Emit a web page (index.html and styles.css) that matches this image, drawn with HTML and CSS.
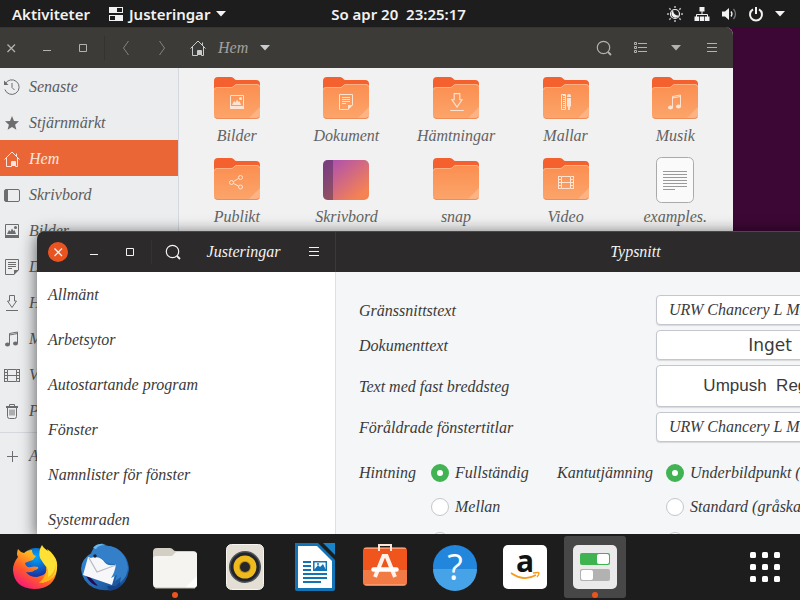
FILE: index.html
```html
<!DOCTYPE html>
<html lang="sv">
<head>
<meta charset="utf-8">
<title>Justeringar</title>
<link rel="stylesheet" href="styles.css">
</head>
<body>
<svg class="defs" aria-hidden="true">
  <defs>
    <linearGradient id="g-folder" x1="0" y1="0" x2="0" y2="1"><stop offset="0" stop-color="#fb8e50"/><stop offset="1" stop-color="#fca56b"/></linearGradient>
    <linearGradient id="g-desk" x1="0" y1="0" x2="1" y2="1"><stop offset="0" stop-color="#a849b4"/><stop offset=".2" stop-color="#b757a4"/><stop offset=".85" stop-color="#f58253"/></linearGradient>
    <symbol id="i-home" viewBox="0 0 16 16"><path d="M.5 8.500 8 1l7.500 7.500M2.500 7v8.500h5v-5h4v5h2V7M12.500 2.500v3" fill="none" stroke="currentColor"/><path d="M8 10h3v5H8z" fill="currentColor"/></symbol>
    <symbol id="i-recent" viewBox="0 0 16 16"><path d="M1.200 5A7.300 7.300 0 1 1 .9 10.500M8 4v4.500l2.500 2.500" fill="none" stroke="currentColor"/><path d="M0 1.500V6h4.500z" fill="currentColor"/></symbol>
    <symbol id="i-star" viewBox="0 0 16 16"><path d="m8 1 2 4.900 5 .4-3.900 3.400 1.300 5.100L8 12l-4.400 2.800 1.300-5.100L1 6.300l5-.4z" fill="currentColor"/></symbol>
    <symbol id="i-desktop" viewBox="0 0 16 16"><rect x=".5" y="2.500" width="15" height="12" rx="1.500" fill="none" stroke="currentColor"/><path d="M1 3h3v11H1z" fill="currentColor"/></symbol>
    <symbol id="i-image" viewBox="0 0 16 16"><path d="M1.500 1.500h13v13h-13z" fill="none" stroke="currentColor"/><path d="M1 12h14v3H1zM3 11l2-4 1.500 1.500L8 5.500l1.500 2.500 1-1 1.500 4z" fill="currentColor"/><circle cx="11.500" cy="4.500" r="1.500" fill="currentColor"/></symbol>
    <symbol id="i-doc" viewBox="0 0 16 16"><path d="M10 15.500H1.500V.5h13V11M4 3.500h8M4 5.500h8M4 7.500h8M4 9.500h4" fill="none" stroke="currentColor"/><path d="M10 11h5l-5 5z" fill="currentColor"/></symbol>
    <symbol id="i-down" viewBox="0 0 16 16"><path d="M5.500.5h5V6h2L8 12.500 3.500 6h2zM2 15.500h12" fill="none" stroke="currentColor"/></symbol>
    <symbol id="i-music" viewBox="0 0 16 16"><path d="M5.500 13.500v-11l8-1.500v11M5.500 4l8-1.500" fill="none" stroke="currentColor"/><ellipse cx="3.500" cy="13.500" rx="2.500" ry="2" fill="currentColor"/><ellipse cx="11.500" cy="12.500" rx="2.500" ry="2" fill="currentColor"/></symbol>
    <symbol id="i-film" viewBox="0 0 16 16"><path d="M3.500 2.500h9v12h-9zM3 8.500h10M.5 2v13M15.500 2v13" fill="none" stroke="currentColor"/><path d="M2 2v13M14 2v13" stroke="currentColor" stroke-width="2" stroke-dasharray="1 2"/></symbol>
    <symbol id="i-trash" viewBox="0 0 16 16"><path d="M2 4h12M5.500 3V1.500h5V3M3.500 4v9.500q0 2 2 2h5q2 0 2-2V4M6 6.500v6M8 6.500v6M10 6.500v6" fill="none" stroke="currentColor"/><path d="M2 3h12v2H2z" fill="currentColor"/></symbol>
    <symbol id="i-plus" viewBox="0 0 16 16"><path d="M8.500 3v11M3 8.500h11" stroke="currentColor"/></symbol>
    <symbol id="i-share" viewBox="0 0 16 16"><g fill="none" stroke="currentColor"><circle cx="3.500" cy="8.500" r="2"/><circle cx="12.500" cy="3.500" r="2"/><circle cx="12.500" cy="13" r="2"/><path d="m5.500 7.500 5-3M5.500 9.500l5 2.500"/></g></symbol>
    <symbol id="i-template" viewBox="0 0 16 16"><path d="M3.500.5h4v15h-4z" fill="none" stroke="currentColor"/><path d="M6 1v14" stroke="currentColor" stroke-width="2" stroke-dasharray="1 1"/><path d="M9 2q0-2 2-2t2 2v1H9zM9 4h4v8l-1 1v3h-2v-3l-1-1z" fill="currentColor"/></symbol>
    <symbol id="i-search" viewBox="0 0 16 16"><circle cx="7.500" cy="7.500" r="6.200" fill="none" stroke="currentColor" stroke-width="1.200"/><path d="m12 12 3 3" stroke="currentColor" stroke-width="1.800"/></symbol>
    <symbol id="i-menu" viewBox="0 0 16 16"><path d="M3 3.500h10M3 7.500h10M3 11.500h10" stroke="currentColor"/></symbol>
    <symbol id="i-caret" viewBox="0 0 10 6"><path d="M0 0h10L5 5.500z" fill="currentColor"/></symbol>
    <symbol id="i-close" viewBox="0 0 16 16"><path d="m4.500 4.500 7.500 7.500M12 4.500 4.500 12" stroke="currentColor" stroke-width="1.300"/></symbol>
    <symbol id="i-min" viewBox="0 0 16 16"><path d="M4 10.500h8" stroke="currentColor"/></symbol>
    <symbol id="i-max" viewBox="0 0 16 16"><path d="M4.500 4.500h7v7h-7z" fill="none" stroke="currentColor"/></symbol>
    <symbol id="f-folder" viewBox="0 0 46 44">
      <path d="M0 42h46v-1H0z" fill="#000" opacity=".08"/>
      <path d="M0 5q0-4 4-4h13q2 0 3 1.500T23 4h19q4 0 4 4v30H0z" fill="#f4602e"/>
      <path d="M0 14q0-3 3-3h14q2 0 3-1.500T23 8h20q3 0 3 3v28q0 4-4 4H4q-4 0-4-4z" fill="url(#g-folder)"/>
      <path d="M.5 14q0-2.500 2.500-2.500h14q2 0 3-1.500t3-1.500h20q2.500 0 2.500 2.500" fill="none" stroke="#ffb184"/>
      <path d="M46 31v8q0 4-4 4h-8z" fill="#fdb384"/>
      <path d="M1 41q1 1.500 3 1.500h38q2 0 3-1.500" fill="none" stroke="#ee8d5a"/>
    </symbol>
  </defs>
</svg>

<header class="topbar">
  <div class="topbar-left">
    <button class="top-btn">Aktiviteter</button>
    <button class="top-btn app-menu">
      <svg width="14" height="14" viewBox="0 0 14 14"><path fill="#f2f2f2" fill-rule="evenodd" d="M0 0h14v6H0zM8 1v4h5V1zM0 8h14v6H0zM1 9v4h5V9z"/></svg>
      Justeringar
      <svg class="caret" width="10" height="6"><use href="#i-caret"/></svg>
    </button>
  </div>
  <time class="clock">So apr 20&nbsp; 23:25:17</time>
  <div class="status">
    <svg width="16" height="16" viewBox="0 0 16 16"><circle cx="8" cy="8" r="4.500" fill="none" stroke="currentColor" stroke-width="1.200"/><path d="M6 4.500a4 4 0 1 0 6 5Q7 10 6 4.500z" fill="currentColor"/><path d="M8 0v2M8 14v2M0 8h2M14 8h2M2.300 2.300l1.400 1.400M12.300 12.300l1.400 1.400M2.300 13.700l1.400-1.400M12.300 3.700l1.400-1.400" stroke="#bbb" stroke-width="1.500"/></svg>
    <svg width="16" height="16" viewBox="0 0 16 16"><path d="M8 5v4M2.500 12V8.500h11V12" fill="none" stroke="currentColor"/><path d="M5.500 1h5v4.500h-5zM.5 10.500h4.500V15H.5zM5.800 10.500h4.500V15H5.800zM11 10.500h4.500V15H11z" fill="currentColor"/></svg>
    <svg width="16" height="16" viewBox="0 0 16 16"><path d="M1 5.500h3L8 2v12l-4-3.500H1z" fill="currentColor"/><path d="M10 5.500q2 2.500 0 5" fill="none" stroke="currentColor" stroke-width="1.300"/><path d="M12.500 3q4 5 0 10" fill="none" stroke="#777" stroke-width="1.300"/></svg>
    <svg width="16" height="16" viewBox="0 0 16 16"><path d="M5 3.300a6 6 0 1 0 6 0M8 1v7" fill="none" stroke="currentColor" stroke-width="2"/></svg>
    <svg width="10" height="6"><use href="#i-caret"/></svg>
  </div>
</header>

<main class="desktop">
  <section class="window files" aria-label="Filer">
    <header class="headerbar">
      <button class="tool" aria-label="Stäng"><svg class="ico"><use href="#i-close"/></svg></button>
      <button class="tool" aria-label="Minimera"><svg class="ico"><use href="#i-min"/></svg></button>
      <button class="tool" aria-label="Maximera"><svg class="ico"><use href="#i-max"/></svg></button>
      <span class="sep"></span>
      <button class="tool dim" aria-label="Bakåt"><svg class="ico" viewBox="0 0 16 16"><path d="m10.500 1-5 7 5 7" fill="none" stroke="currentColor"/></svg></button>
      <button class="tool dim" aria-label="Framåt"><svg class="ico" viewBox="0 0 16 16"><path d="m5.500 1 5 7-5 7" fill="none" stroke="currentColor"/></svg></button>
      <button class="path"><svg class="ico"><use href="#i-home"/></svg><span>Hem</span><svg width="10" height="6"><use href="#i-caret"/></svg></button>
      <span class="spring"></span>
      <button class="tool" aria-label="Sök"><svg class="ico"><use href="#i-search"/></svg></button>
      <button class="tool" aria-label="Lista"><svg class="ico" viewBox="0 0 16 16"><path d="M6 3.500h9M6 7.500h9M6 11.500h9" stroke="currentColor"/><path d="M2.500 2.500h2v2h-2zM2.500 6.500h2v2h-2zM2.500 10.500h2v2h-2z" fill="none" stroke="currentColor"/></svg></button>
      <button class="tool" aria-label="Vy"><svg width="10" height="6"><use href="#i-caret"/></svg></button>
      <button class="tool" aria-label="Meny"><svg class="ico"><use href="#i-menu"/></svg></button>
    </header>
    <div class="files-body">
      <nav class="places">
        <a href="#"><svg class="ico"><use href="#i-recent"/></svg>Senaste</a>
        <a href="#"><svg class="ico"><use href="#i-star"/></svg>Stjärnmärkt</a>
        <a href="#" class="active"><svg class="ico"><use href="#i-home"/></svg>Hem</a>
        <a href="#"><svg class="ico"><use href="#i-desktop"/></svg>Skrivbord</a>
        <a href="#"><svg class="ico"><use href="#i-image"/></svg>Bilder</a>
        <a href="#"><svg class="ico"><use href="#i-doc"/></svg>Dokument</a>
        <a href="#"><svg class="ico"><use href="#i-down"/></svg>Hämtningar</a>
        <a href="#"><svg class="ico"><use href="#i-music"/></svg>Musik</a>
        <a href="#"><svg class="ico"><use href="#i-film"/></svg>Video</a>
        <a href="#"><svg class="ico"><use href="#i-trash"/></svg>Papperskorg</a>
        <hr>
        <a href="#"><svg class="ico"><use href="#i-plus"/></svg>Andra platser</a>
      </nav>
      <ul class="icons">
        <li><svg viewBox="0 0 46 44"><use href="#f-folder"/><use href="#i-image" x="15" y="18" width="16" height="16"/></svg>Bilder</li>
        <li><svg viewBox="0 0 46 44"><use href="#f-folder"/><use href="#i-doc" x="15" y="18" width="16" height="16"/></svg>Dokument</li>
        <li><svg viewBox="0 0 46 44"><use href="#f-folder"/><use href="#i-down" x="15" y="17" width="18" height="18"/></svg>Hämtningar</li>
        <li><svg viewBox="0 0 46 44"><use href="#f-folder"/><use href="#i-template" x="15" y="18" width="16" height="16"/></svg>Mallar</li>
        <li><svg viewBox="0 0 46 44"><use href="#f-folder"/><use href="#i-music" x="15" y="18" width="16" height="16"/></svg>Musik</li>
        <li><svg viewBox="0 0 46 44"><use href="#f-folder"/><use href="#i-share" x="14" y="17" width="16" height="16"/></svg>Publikt</li>
        <li><svg viewBox="0 0 46 44"><rect y="3" width="46" height="40" rx="5" fill="url(#g-desk)"/><path d="M10 3v40H5q-5 0-5-5V8q0-5 5-5z" fill="#3b2a4a" opacity=".45"/></svg>Skrivbord</li>
        <li><svg viewBox="0 0 46 44"><use href="#f-folder"/></svg>snap</li>
        <li><svg viewBox="0 0 46 44"><use href="#f-folder"/><use href="#i-film" x="15" y="17" width="16" height="16"/></svg>Video</li>
        <li><svg class="sheet" viewBox="0 0 46 46"><rect x="4.500" y=".5" width="37" height="45" rx="5" fill="#fafafa" stroke="#aaa"/><path d="M11 14.500h24M11 17.500h24M11 20.500h24M11 23.500h24M11 26.500h24M11 29.500h24M11 32.500h12" stroke="#999"/></svg>examples.</li>
      </ul>
    </div>
  </section>

  <section class="window tweaks" aria-label="Justeringar">
    <header class="headerbar dark">
      <div class="head-side">
        <button class="tool" aria-label="Stäng"><span class="close-dot"><svg class="ico"><use href="#i-close"/></svg></span></button>
        <button class="tool" aria-label="Minimera"><svg class="ico"><use href="#i-min"/></svg></button>
        <button class="tool" aria-label="Maximera"><svg class="ico"><use href="#i-max"/></svg></button>
        <span class="sep"></span>
        <button class="tool" aria-label="Sök"><svg class="ico"><use href="#i-search"/></svg></button>
        <h1>Justeringar</h1>
        <button class="tool" aria-label="Meny"><svg class="ico"><use href="#i-menu"/></svg></button>
      </div>
      <h2>Typsnitt</h2>
    </header>
    <div class="tweaks-body">
      <nav class="sections">
        <a href="#">Allmänt</a>
        <a href="#">Arbetsytor</a>
        <a href="#">Autostartande program</a>
        <a href="#">Fönster</a>
        <a href="#">Namnlister för fönster</a>
        <a href="#">Systemraden</a>
      </nav>
      <div class="page">
        <div class="fonts">
          <label for="f1">Gränssnittstext</label>
          <button id="f1" class="font-btn"><span class="face">URW Chancery L Medium Italic</span><span>11</span></button>
          <label for="f2">Dokumenttext</label>
          <button id="f2" class="font-btn"><span class="face dejavu">Inget</span><span>11</span></button>
          <label for="f3">Text med fast breddsteg</label>
          <button id="f3" class="font-btn tall"><span class="face sans">Umpush&nbsp; Regular</span><span>13</span></button>
          <label for="f4">Föråldrade fönstertitlar</label>
          <button id="f4" class="font-btn"><span class="face">URW Chancery L Medium Italic</span><span>11</span></button>
        </div>
        <div class="render">
          <span class="group" id="hint">Hintning</span>
          <div class="radios" role="radiogroup" aria-labelledby="hint">
            <label><input type="radio" name="hint" checked>Fullständig</label>
            <label><input type="radio" name="hint">Mellan</label>
            <label><input type="radio" name="hint">Lätt</label>
          </div>
          <span class="group" id="aa">Kantutjämning</span>
          <div class="radios" role="radiogroup" aria-labelledby="aa">
            <label><input type="radio" name="aa" checked>Underbildpunkt (för LCD-skärmar)</label>
            <label><input type="radio" name="aa">Standard (gråskala)</label>
            <label><input type="radio" name="aa">Ingen</label>
          </div>
        </div>
      </div>
    </div>
  </section>
</main>

<nav class="dock">
  <button class="app" aria-label="Firefox"><svg viewBox="0 0 48 48">
    <defs><linearGradient id="ff" x1=".9" y1="0" x2=".2" y2="1"><stop offset="0" stop-color="#ffe226"/><stop offset=".35" stop-color="#ffb01c"/><stop offset=".65" stop-color="#ff5a2b"/><stop offset="1" stop-color="#f5127f"/></linearGradient><radialGradient id="fb" cx=".5" cy=".3" r=".7"><stop offset="0" stop-color="#00a8ff"/><stop offset="1" stop-color="#1a2a9a"/></radialGradient></defs>
    <circle cx="25" cy="20" r="15" fill="url(#fb)"/>
    <path d="M7 6q-2 5 0 8-5 6-5 13 1 18 21 19 21 0 23-20 1-8-3-13-2-4-7-7 3 6 4 12 0 13-14 16-8 0-11-5 6 1 9-2 4-1 3-3-4-1-7 0-5 1-6-4 4-2 8-3l3-4q-4-1-4-6-5 0-8 3-4-1-6-4z" fill="url(#ff)"/>
    <path d="M31 2q-4 6-2 13 3 5 7 10 2 8-5 15 15-4 15-17-1-9-7-14-6-3-8-7z" fill="#ffe034"/>
    <path d="M35 23q2 9-7 17 17-1 17-19-1 9-8 13 1-6-2-11z" fill="#ffb31a"/>
  </svg></button>
  <button class="app" aria-label="Thunderbird"><svg viewBox="0 0 48 48">
    <defs><linearGradient id="tb" x1="0" y1="0" x2="1" y2="1"><stop offset="0" stop-color="#3f93dc"/><stop offset=".5" stop-color="#256fbb"/><stop offset="1" stop-color="#15488c"/></linearGradient></defs>
    <path d="M22 0q-10 3-10 9Q0 16 0 26q1 13 13 19 10 4 22 1 11-5 13-19 0-14-13-22Q29 2 19 3z" fill="url(#tb)"/>
    <path d="M5 33q5 9 12 10l-8-9z" fill="#230b52"/>
    <path d="m7 14-5 18 29 10 6-21q-11 4-15-4-6-5-12-2z" fill="#f7f7fa"/>
    <path d="m8 15 8 14 19-7" fill="none" stroke="#b9bcc6" stroke-width="1.300"/>
    <path d="M19 1Q9 5 10 14q4-3 9 0 6 8 16 7-1 8-5 14l6-3-2 6 6-4-1 6q8-7 8-16Q44 8 32 4z" fill="#337fc9"/>
    <path d="M12 5q4-6 13-3-8 0-10 4" fill="#69b8ef"/><circle cx="14" cy="13" r="1.700" fill="#222"/>
    <path d="M26 43h9l4-4 1 4q-5 4-12 5z" fill="#15438a"/>
  </svg></button>
  <button class="app running" aria-label="Filer"><svg viewBox="0 0 48 48">
    <path d="M2 9q0-4 4-4h13q2 0 3 1.500T25 8h17q4 0 4 4v12H2z" fill="#d3cfc4"/>
    <path d="M2 16q0-3 3-3h15q2 0 3-2t3-2h17q3 0 3 3v29q0 4-4 4H6q-4 0-4-4z" fill="#f5f4f0"/>
    <path d="M46 33v8q0 4-4 4h-8z" fill="#fff"/><path d="M4 45h40" stroke="#c3beb2"/>
  </svg></button>
  <button class="app" aria-label="Rhythmbox"><svg viewBox="0 0 48 48">
    <rect x="5.500" y="1.500" width="37" height="45" rx="5" fill="#e4dfd5" stroke="#f6f4ef"/>
    <circle cx="24" cy="24" r="16" fill="#51545b"/><circle cx="24" cy="24" r="14.500" fill="#23252d"/><circle cx="24" cy="24" r="11.500" fill="#eeba1e"/><circle cx="24" cy="24" r="6" fill="#b78d13"/><circle cx="24" cy="24" r="5" fill="#25272c"/>
  </svg></button>
  <button class="app" aria-label="Writer"><svg viewBox="0 0 48 48">
    <path d="M4 0h23l17 17v29q0 2-2 2H6q-2 0-2-2z" fill="#1273b5"/><path d="M7 3h19l15 15v27H7z" fill="#fff"/><path d="M32 0h12v12z" fill="#1684c6"/>
    <path d="M12 19h8M12 23h8M12 27h8M12 31h24M12 35h24M12 39h18" stroke="#1273b5" stroke-width="2"/><path d="M22.800 18.800h12.500v8.500H22.800z" fill="#fff" stroke="#1273b5" stroke-width="1.500"/><path d="m23 27 4-5 2 2 3-3 3 6z" fill="#1273b5"/><circle cx="27" cy="21" r="1" fill="#1273b5"/>
  </svg></button>
  <button class="app" aria-label="Programvara"><svg viewBox="0 0 48 48">
    <rect x="2" y="4" width="44" height="38" rx="4" fill="#f0551e"/><path d="M2 27h44v12q0 4-4 4H6q-4 0-4-4z" fill="#f27b45"/><path d="M3 5.500h42M4 41.500h40" stroke="#ff9668"/>
    <path d="M18 8V2h12v6" fill="none" stroke="#ffe6da" stroke-width="2"/><path d="M14 34 22.500 13h3L34 34" fill="none" stroke="#fff2ea" stroke-width="4"/><path d="M12.500 26.500h23" stroke="#fff" stroke-width="4.500" stroke-linecap="round"/>
  </svg></button>
  <button class="app" aria-label="Hjälp"><svg viewBox="0 0 48 48">
    <circle cx="24" cy="24" r="22" fill="#2286dd"/><path d="M2 26a22 22 0 0 0 44 0z" fill="#46a3e8"/><text class="help-mark" x="24" y="37" text-anchor="middle">?</text>
  </svg></button>
  <button class="app" aria-label="Amazon"><svg viewBox="0 0 48 48">
    <rect x="2" y="2" width="44" height="44" rx="5" fill="#fff"/><text class="shop-mark" x="24" y="29" text-anchor="middle">a</text><path d="M10 30q13 9 25 2" fill="none" stroke="#f59a1b" stroke-width="1.700"/><path d="M32 30q6-1 6 0 0 2-2 4" fill="none" stroke="#f59a1b" stroke-width="1.300"/>
  </svg></button>
  <button class="app running focused" aria-label="Justeringar"><svg viewBox="0 0 48 48">
    <rect x="2" y="2" width="44" height="44" rx="5" fill="#eaeaea"/><rect x="9" y="10" width="30" height="12" rx="2" fill="#3fb34f"/><rect x="26" y="11" width="12" height="10" rx="2" fill="#fff"/><rect x="9" y="26" width="30" height="12" rx="2" fill="#b2b2b2"/><rect x="10" y="27" width="12" height="10" rx="2" fill="#fff"/>
  </svg></button>
  <button class="app show-all" aria-label="Visa program"><svg viewBox="0 0 48 48"><g fill="#fff"><rect x="9" y="9" width="6" height="6" rx="1.500"/><rect x="21" y="9" width="6" height="6" rx="1.500"/><rect x="33" y="9" width="6" height="6" rx="1.500"/><rect x="9" y="21" width="6" height="6" rx="1.500"/><rect x="21" y="21" width="6" height="6" rx="1.500"/><rect x="33" y="21" width="6" height="6" rx="1.500"/><rect x="9" y="33" width="6" height="6" rx="1.500"/><rect x="21" y="33" width="6" height="6" rx="1.500"/><rect x="33" y="33" width="6" height="6" rx="1.500"/></g></svg></button>
</nav>
</body>
</html>
```
FILE: styles.css
```css
* { box-sizing: border-box; }

body {
  margin: 0;
  height: 100vh;
  display: flex;
  flex-direction: column;
  overflow: hidden;
  background: #3c0734;
  color: #3a3a3a;
  font: italic 16px/20px "URW Chancery L", "Z003", "Liberation Serif", serif;
}

button {
  margin: 0;
  padding: 0;
  border: 0;
  background: none;
  color: inherit;
  font: inherit;
}

a { color: inherit; text-decoration: none; }
svg { display: block; flex: none; }
h1, h2 { margin: 0; font-size: 16px; font-weight: normal; text-align: center; }
.defs { position: absolute; width: 0; height: 0; }
.ico { width: 16px; height: 16px; }

/* Top bar */
.topbar {
  flex: none;
  display: grid;
  grid-template-columns: 1fr auto 1fr;
  align-items: center;
  height: 27px;
  padding: 0 15px 0 12px;
  background: #1d1d1d;
  color: #f2f2f2;
  font: 600 15px/20px "Noto Sans", "Open Sans", sans-serif;
}
.topbar-left { display: flex; gap: 19px; }
.top-btn { white-space: nowrap; }
.app-menu { display: flex; align-items: center; gap: 6px; }
.status { display: flex; align-items: center; justify-content: flex-end; gap: 11px; }

/* Windows */
.desktop { position: relative; flex: 1; min-height: 0; overflow: hidden; }
.window {
  position: absolute;
  bottom: 0;
  display: flex;
  flex-direction: column;
  overflow: hidden;
}
.files { top: 0; left: -7px; right: 67px; border-radius: 0 8px 0 0; background: #f1f1f1; }
.tweaks {
  top: 204px;
  left: 37px;
  right: -135px;
  border-radius: 8px 8px 0 0;
  background: #f4f6f8;
  box-shadow: 0 3px 16px 1px rgba(0, 0, 0, .6);
}
.headerbar {
  flex: none;
  display: flex;
  align-items: center;
  height: 41px;
  padding-right: 3px;
  border-top: 1px solid #353432;
  background: #3d3b38;
  color: #b4b2af;
}
.tool { display: flex; align-items: center; justify-content: center; width: 36px; height: 36px; }
.dim { color: #85827e; }
.sep { width: 1px; height: 24px; margin: 0 3px; background: #353331; }
.spring { flex: 1; }
.path { display: flex; align-items: center; gap: 12px; padding: 0 10px; color: #c8ccce; }
.path span { color: #a3a19e; }

.files-body { flex: 1; display: flex; min-height: 0; }
.places {
  flex: none;
  width: 186px;
  border-right: 1px solid #d5d8e0;
  background: #ebedef;
  color: #5c5c5c;
}
.places a { display: flex; align-items: center; gap: 9px; height: 36px; padding: 2px 11px 0; }
.places .ico { color: #6d6d6d; }
.places .active, .places .active .ico { background: #eb6637; color: #fbe5dc; }
.places hr { height: 1px; margin: 4px 0; border: 0; background: #d5d8dc; }

.icons {
  flex: 1;
  display: grid;
  grid-template-columns: repeat(5, 1fr);
  grid-auto-rows: 81px;
  align-content: start;
  margin: 0;
  padding: 8px 3px 0;
  list-style: none;
  color: #636363;
}
.icons li { display: flex; flex-direction: column; align-items: center; gap: 6px; }
.icons svg { width: 46px; height: 44px; color: #fde3d2; }
.icons .sheet { height: 46px; margin-bottom: -2px; }

/* Tweaks */
.dark { border-color: #4b4947; padding: 0; background: #2c2a2a; color: #f3f3f3; }
.head-side {
  display: flex;
  align-items: center;
  align-self: stretch;
  width: 299px;
  padding: 0 3px;
  border-right: 1px solid #3b3939;
}
.head-side h1, .dark h2 { flex: 1; }
.close-dot { display: grid; place-items: center; width: 20px; height: 20px; border-radius: 50%; background: #e95420; }
.tweaks-body { flex: 1; display: flex; min-height: 0; }
.sections { flex: none; width: 299px; border-right: 1px solid #dfe1e5; background: #fff; }
.sections a { display: flex; align-items: center; height: 45px; padding: 0 11px; }
.page { flex: 1; min-width: 0; padding: 23px 24px 23px 23px; }
.fonts {
  display: grid;
  grid-template-columns: 1fr 255px;
  gap: 5px;
  align-items: center;
}
.fonts label { padding-top: 2px; }
.font-btn {
  display: flex;
  align-items: center;
  gap: 12px;
  height: 30px;
  padding: 0 12px;
  border: 1px solid #c3c7cd;
  border-radius: 4px;
  background: #fff;
  box-shadow: 0 1px 1px rgba(0, 0, 0, .12);
}
.tall { height: 42px; }
.face { flex: 1; white-space: nowrap; }
.dejavu { font: 17px/20px "DejaVu Sans", sans-serif; }
.sans { font: 17px/20px "Liberation Sans", sans-serif; }
.render {
  display: grid;
  grid-template-columns: 72px 126px 109px 1fr;
  padding-top: 21px;
}
.group { line-height: 20px; }
.radios { display: grid; grid-auto-rows: 20px; gap: 14px; }
.radios label { display: flex; align-items: center; gap: 6px; white-space: nowrap; }
.radios input {
  appearance: none;
  width: 18px;
  height: 18px;
  margin: 0;
  border: 1px solid #c3c7cd;
  border-radius: 50%;
  background: #fff;
}
.radios input:checked { border: 6px solid #41b353; }

/* Dock */
.dock { flex: none; display: flex; gap: 8px; height: 66px; padding: 2px 4px; background: #1d1d1d; }
.app { position: relative; display: grid; place-items: center; width: 62px; height: 62px; border-radius: 3px; }
.app svg { width: 48px; height: 48px; }
.focused { background: #474747; }
.running::after {
  content: "";
  position: absolute;
  bottom: 0;
  left: 28px;
  width: 6px;
  height: 6px;
  border-radius: 50%;
  background: #e95420;
}
.show-all { margin-left: auto; }
.help-mark { fill: #fff; font: 36px "Open Sans", sans-serif; }
.shop-mark { fill: #111; font: bold 30px "Open Sans", sans-serif; }
```
